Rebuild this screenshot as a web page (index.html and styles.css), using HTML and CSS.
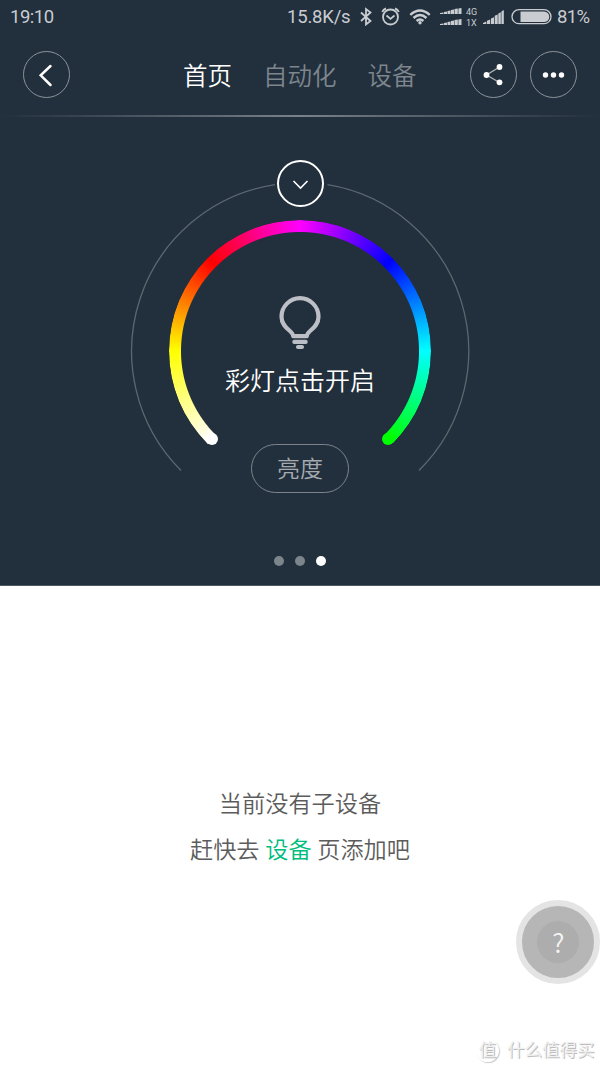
FILE: index.html
```html
<!DOCTYPE html>
<html lang="zh-CN">
<head>
    <meta charset="UTF-8">
    <title>首页</title>
    <link rel="stylesheet" href="styles.css">
</head>
<body>

<div class="panel">
    <!-- 状态栏 -->
    <div class="status-bar">
        <span class="time">19:10</span>
        <span class="speed">15.8K/s</span>
        <!-- 蓝牙、闹钟、WiFi、信号、电池 -->
        <svg class="status-icons" width="196" height="34" viewBox="356 0 196 34" fill="none" stroke="#c9cdd1">
            <path d="M361 12.5L370.5 21L366 24.5V9L370.5 12.5L361 21" stroke-width="1.8"/>
            <circle cx="390.5" cy="17" r="7.5" stroke-width="1.8"/>
            <path d="M386.5 15.5L390.5 18.8L394.5 15.5" stroke-width="1.7"/>
            <path d="M382.3 12Q383.3 9.3 386 8.5M395 8.5Q397.7 9.3 398.8 12" stroke-width="1.9"/>
            <path d="M410.3 14.8Q420 6.2 429.7 14.8M413.5 18Q420 12 426.5 18M416.6 21Q420 18 423.4 21" stroke-width="2.4"/>
            <circle cx="420" cy="22.7" r="1.7" fill="#c9cdd1" stroke="none"/>
            <g fill="#c9cdd1" stroke="none">
                <path d="M440 14v-1l3.5-.6V14zM444 14v-2l3-.4V14zM447.5 14v-3l3-.4V14zM451 14v-4l3-.4V14zM454.5 14v-5l3.3-.4V14zM458.4 14V8.4l3.1-.4V14z"/>
                <path d="M440 25v-1l3.5-.6V25zM444 25v-2l3-.4V25zM447.5 25v-3l3-.4V25zM451 25v-4l3-.4V25zM454.5 25v-5l3.3-.4V25zM458.4 25v-5.6l3.1-.4V25z"/>
                <path d="M483 24v-1l3.3-1.4V24zM487 24v-3.2l3.2-1.4V24zM491 24v-5.5l3-1.3V24zM494.7 24v-8.2l3-1.4V24zM498.3 24V13.5l2.5-1.2V24zM501.4 24V11.500l2.4-1.5V24z"/>
                <text x="466" y="14.8" class="net">4G</text>
                <text x="466" y="26" class="net">1X</text>
                <path d="M520.5 11.5H544a5.3 5.3 0 0 1 0 10.600H520.500z"/>
            </g>
            <rect x="512" y="9.7" width="39" height="14" rx="7" stroke-width="1.3"/>
        </svg>
        <span class="battery">81%</span>
    </div>

    <!-- 导航 -->
    <div class="nav">
        <div class="round-btn">
            <svg width="46" height="46" fill="none" stroke="#fff" stroke-width="2.5" stroke-linecap="round">
                <path d="M26.5 14L16.7 23.3L26.5 33"/>
            </svg>
        </div>
        <div class="tabs">
            <span class="tab active">首页</span>
            <span class="tab">自动化</span>
            <span class="tab">设备</span>
        </div>
        <div class="round-btn">
            <svg width="46" height="46" fill="#fff">
                <path d="M28.5 15L15.5 23L28.5 30.5" fill="none" stroke="#b0b6ba" stroke-width="1.3"/>
                <circle cx="15.5" cy="23" r="2.9"/>
                <circle cx="28.5" cy="15" r="2.9"/>
                <circle cx="28.5" cy="30.3" r="2.9"/>
            </svg>
        </div>
        <div class="round-btn">
            <svg width="46" height="46" fill="#fff">
                <circle cx="14.5" cy="23" r="2.7"/>
                <circle cx="22.5" cy="23" r="2.7"/>
                <circle cx="30.5" cy="23" r="2.7"/>
            </svg>
        </div>
    </div>
    <div class="divider"></div>

    <!-- 彩灯转盘 -->
    <div class="dial">
        <svg class="outer-ring" width="340" height="340" fill="none" stroke="#5c6870" stroke-width="1.3">
            <path d="M51 310.5A168.5 168.5 0 0 1 145 24.7M197.5 24.7A168.5 168.5 0 0 1 289 310.5"/>
        </svg>
        <div class="color-ring"></div>
        <span class="cap cap-white"></span>
        <span class="cap cap-green"></span>

        <div class="down-btn">
            <svg width="43" height="43" fill="none" stroke="#fff" stroke-width="1.6">
                <path d="M14.5 19L21.5 26L28.5 19"/>
            </svg>
        </div>
        <svg class="bulb" width="44" height="54" viewBox="278 296 44 54" fill="none" stroke="#bcbfc5">
            <path d="M293.3 336.2C292.8 330.5 281.5 328 281.5 316.7A18.5 18.5 0 0 1 318.5 316.7C318.5 328 307.2 330.5 306.7 336.2Z" stroke-width="4.2" stroke-linejoin="round"/>
            <path d="M294.3 341.9H305.7M298 347H302" stroke-width="4.1" stroke-linecap="round"/>
        </svg>
        <div class="dial-text">彩灯点击开启</div>
        <div class="brightness">亮度</div>
    </div>

    <div class="dots">
        <span></span>
        <span></span>
        <span class="on"></span>
    </div>
</div>

<!-- 没有子设备时的提示 -->
<div class="empty">
    <p>当前没有子设备</p>
    <p>赶快去 <a class="link">设备</a> 页添加吧</p>
</div>

<div class="help"><span>?</span></div>

<div class="watermark">
    <span class="mark">值</span>
    <span>什么值得买</span>
</div>

</body>
</html>
```
FILE: styles.css
```css
* {
    box-sizing: border-box;
}

body {
    position: relative;
    margin: 0;
    width: 600px;
    height: 1067px;
    overflow: hidden;
    background: #fff;
    font-family: Roboto, "Noto Sans CJK SC", sans-serif;
    font-weight: 350;
}

svg {
    display: block;
}

/* 上半部分深色区域 */
.panel {
    height: 586px;
    background: #222f3c;
    border-bottom: 1px solid #4c5963;
}

.status-bar {
    display: flex;
    align-items: center;
    height: 34px;
    padding-left: 10px;
    color: #c9cdd1;
    font-size: 18.5px;
    font-weight: 400;
    letter-spacing: -0.2px;
}

.time {
    width: 277px;
    letter-spacing: -0.5px;
}

.speed {
    width: 69px;
}

.battery {
    margin-left: 5px;
    letter-spacing: -0.6px;
}

.net {
    font-size: 9px;
    letter-spacing: 0;
}

.nav {
    display: flex;
    align-items: center;
    height: 81px;
    padding: 0 23px;
}

.round-btn {
    width: 47px;
    height: 47px;
    border: 1px solid #8b9499;
    border-radius: 50%;
}

.round-btn + .round-btn {
    margin-left: 13px;
}

.tabs {
    display: flex;
    flex: 1;
    gap: 31px;
    padding: 4px 0 0 113px;
}

.tab {
    color: #7d868d;
    font-size: 24.5px;
    line-height: 36px;
    white-space: nowrap;
}

.tab.active {
    color: #fff;
}

.divider {
    height: 2px;
    background: linear-gradient(to right, transparent, #77828a 50%, transparent);
}

/* 转盘 */
.dial {
    position: relative;
    display: flex;
    flex-direction: column;
    align-items: center;
    width: 340px;
    height: 340px;
    margin: 43px auto 0;
}

.outer-ring {
    position: absolute;
    left: 0;
    top: 0;
}

.color-ring {
    position: absolute;
    left: 39px;
    top: 60px;
    width: 262px;
    height: 262px;
    border-radius: 50%;
    background: conic-gradient(from 225deg, #fff, #ff0 45deg, #f00 90deg, #f0f 135deg, #00f 180deg, #0ff 225deg, #0f0 270deg, transparent 270deg);
    -webkit-mask: radial-gradient(circle, transparent 118.5px, #000 119.5px);
    mask: radial-gradient(circle, transparent 118.5px, #000 119.5px);
}

/* 圆环两端的圆头 */
.cap {
    position: absolute;
    top: 273.4px;
    width: 12px;
    height: 12px;
    border-radius: 50%;
}

.cap-white {
    left: 75.6px;
    background: #fff;
}

.cap-green {
    left: 252.4px;
    background: #0f0;
}

.down-btn {
    position: relative;
    width: 47px;
    height: 47px;
    margin-left: 1px;
    border: 2px solid #fff;
    border-radius: 50%;
}

.bulb {
    margin-top: 89px;
}

.dial-text {
    margin-top: 14px;
    color: #fff;
    font-size: 25px;
    line-height: 36px;
}

.brightness {
    width: 98px;
    height: 49px;
    margin-top: 44px;
    border: 1px solid #7b858b;
    border-radius: 25px;
    color: #a5abb0;
    font-size: 23px;
    line-height: 50px;
    text-align: center;
}

.dots {
    display: flex;
    justify-content: center;
    gap: 11px;
    margin-top: 56px;
}

.dots span {
    width: 10px;
    height: 10px;
    border-radius: 50%;
    background: #7c858b;
}

.dots .on {
    background: #fff;
}

.empty {
    padding-top: 195px;
    color: #5c5c5c;
    font-size: 23.2px;
    line-height: 46px;
    text-align: center;
}

.empty p {
    margin: 0;
}

.link {
    color: #00bc7d;
}

/* 悬浮帮助按钮 */
.help {
    position: absolute;
    left: 516.4px;
    top: 900px;
    display: flex;
    align-items: center;
    justify-content: center;
    width: 84px;
    height: 84px;
    border: 6px solid #e4e4e4;
    border-radius: 50%;
    background: #b6b6b6;
}

.help span {
    width: 42px;
    height: 42px;
    border-radius: 50%;
    background: #adadad;
    color: #f5f5f5;
    font-family: "Noto Sans CJK SC", sans-serif;
    font-size: 26px;
    line-height: 41px;
    text-align: center;
}

.watermark {
    position: absolute;
    left: 476px;
    top: 1038px;
    display: flex;
    align-items: center;
    gap: 8px;
    color: #f0f0f0;
    font-size: 17.5px;
    font-weight: 400;
    line-height: 24px;
    white-space: nowrap;
    text-shadow: 1px 1px 0 #bdbdbd;
}

.mark {
    width: 23px;
    height: 23px;
    border-radius: 50%;
    box-shadow: 1px 1px 1px #ccc;
    line-height: 22px;
    text-align: center;
}
```
